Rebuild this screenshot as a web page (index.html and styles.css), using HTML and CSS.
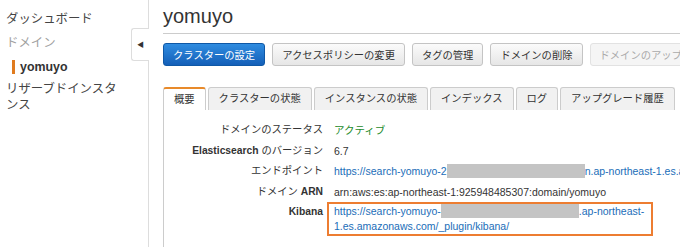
FILE: index.html
```html
<!DOCTYPE html>
<html lang="ja">
<head>
  <meta charset="UTF-8" />
  <title>yomuyo</title>
  <link rel="stylesheet" href="styles.css">
</head>
<body>
  <nav class="sidebar">
    <a class="nav-item">ダッシュボード</a>
    <span class="nav-item nav-muted">ドメイン</span>
    <a class="nav-item nav-current">yomuyo</a>
    <a class="nav-item nav-last">リザーブドインスタンス</a>
    <div class="collapse-tab">&#9664;</div>
  </nav>

  <main class="content">
    <h1 class="title">yomuyo</h1>

    <div class="actions">
      <button class="btn btn-primary">クラスターの設定</button>
      <button class="btn">アクセスポリシーの変更</button>
      <button class="btn">タグの管理</button>
      <button class="btn">ドメインの削除</button>
      <button class="btn btn-disabled">ドメインのアップグレード</button>
    </div>

    <div class="tabs">
      <span class="tab tab-active">概要</span>
      <span class="tab">クラスターの状態</span>
      <span class="tab">インスタンスの状態</span>
      <span class="tab">インデックス</span>
      <span class="tab">ログ</span>
      <span class="tab">アップグレード履歴</span>
    </div>

    <div class="panel">
      <div class="row">
        <span class="label ja">ドメインのステータス</span>
        <span class="value status-ok">アクティブ</span>
      </div>
      <div class="row">
        <span class="label">Elasticsearch <span class="ja">のバージョン</span></span>
        <span class="value">6.7</span>
      </div>
      <div class="row">
        <span class="label ja">エンドポイント</span>
        <span class="value link nowrap">https://search-yomuyo-2<span class="mask"></span>n.ap-northeast-1.es.amazonaws.com</span>
      </div>
      <div class="row">
        <span class="label"><span class="ja">ドメイン</span> ARN</span>
        <span class="value">arn:aws:es:ap-northeast-1:925948485307:domain/yomuyo</span>
      </div>
      <div class="row">
        <span class="label">Kibana</span>
        <span class="value link highlight">https://search-yomuyo-<span class="mask"></span>.ap-northeast-1.es.amazonaws.com/_plugin/kibana/</span>
      </div>
    </div>
  </main>
</body>
</html>
```

FILE: styles.css
```css
body {
  margin: 0;
  display: flex;
  height: 247px;
  overflow: hidden;
  font-family: "Liberation Sans", Arial, "Noto Sans CJK JP", sans-serif;
  color: #333;
  background: #fff;
}

/* サイドバー */
.sidebar {
  position: relative;
  width: 149px;
  flex-shrink: 0;
  border-right: 1px solid #ddd;
  padding: 11px 28px 0 6px;
  box-sizing: border-box;
  font-size: 12.4px;
}
.nav-item {
  display: block;
  line-height: 16px;
  color: #444;
  margin-bottom: 8px;
}
.nav-muted {
  color: #a0a0a0;
  margin-bottom: 9px;
}
.nav-current {
  font-weight: bold;
  color: #333;
  line-height: 14px;
  border-left: 3px solid #e07b1f;
  margin-left: 6px;
  padding-left: 5px;
  margin-bottom: 7px;
}
.collapse-tab {
  position: absolute;
  top: 28px;
  right: -1px;
  width: 17px;
  height: 31px;
  border: 1px solid #ddd;
  border-right: none;
  border-radius: 3px 0 0 3px;
  background: #fff;
  font-size: 7px;
  line-height: 31px;
  text-align: center;
  color: #333;
}

/* メイン */
.content {
  flex: 1;
  padding-left: 14px;
  min-width: 0;
  font-size: 10.3px;
}
.title {
  font-size: 20px;
  font-weight: normal;
  color: #333;
  margin: 4px 0 0;
  line-height: 24px;
  padding-bottom: 5px;
  border-bottom: 1px solid #ccc;
}
.actions {
  display: flex;
  gap: 7px;
  margin-top: 9px;
  white-space: nowrap;
}
.btn {
  font-family: inherit;
  font-size: 10.3px;
  height: 23px;
  padding: 0 9px;
  border: 1px solid #c4c4c4;
  border-radius: 3px;
  background: linear-gradient(#fbfbfb, #e6e6e6);
  color: #333;
  flex-shrink: 0;
}
.btn-primary {
  background: linear-gradient(#2f8ce0, #145fb8);
  border-color: #0f58a6;
  color: #fff;
}
.btn-disabled {
  color: #aaa;
  background: #f5f5f5;
  border-color: #e2e2e2;
}

.tabs {
  display: flex;
  gap: 2px;
  margin-top: 21px;
  white-space: nowrap;
}
.tab {
  flex-shrink: 0;
  height: 22px;
  line-height: 22px;
  padding: 0 10px;
  border: 1px solid #ccc;
  border-bottom: none;
  border-radius: 3px 3px 0 0;
  background: #f1f1f1;
  color: #333;
}
.tab-active {
  background: #fff;
  border-top: 2px solid #e88a2a;
  height: 21px;
}

.panel {
  border-left: 1px solid #ccc;
  padding-top: 12px;
  height: 200px;
}
.row {
  display: flex;
  line-height: 16px;
  margin-bottom: 4.5px;
}
.label {
  width: 159px;
  flex-shrink: 0;
  text-align: right;
  font-weight: bold;
  color: #333;
}
.ja {
  font-weight: normal;
}
.value {
  padding-left: 11px;
  color: #333;
  font-size: 10.5px;
}
.status-ok {
  color: #1d8a2a;
}
.link {
  color: #1a6db8;
}
.nowrap {
  white-space: nowrap;
}
.mask {
  display: inline-block;
  width: 138px;
  height: 14px;
  background: #c4c4c4;
  vertical-align: -3px;
}
.highlight {
  margin: -2px 0 0 4px;
  padding: 0 5px;
  line-height: 15px;
  border: 2px solid #ed7d31;
  width: 312px;
  flex-shrink: 0;
}
```
